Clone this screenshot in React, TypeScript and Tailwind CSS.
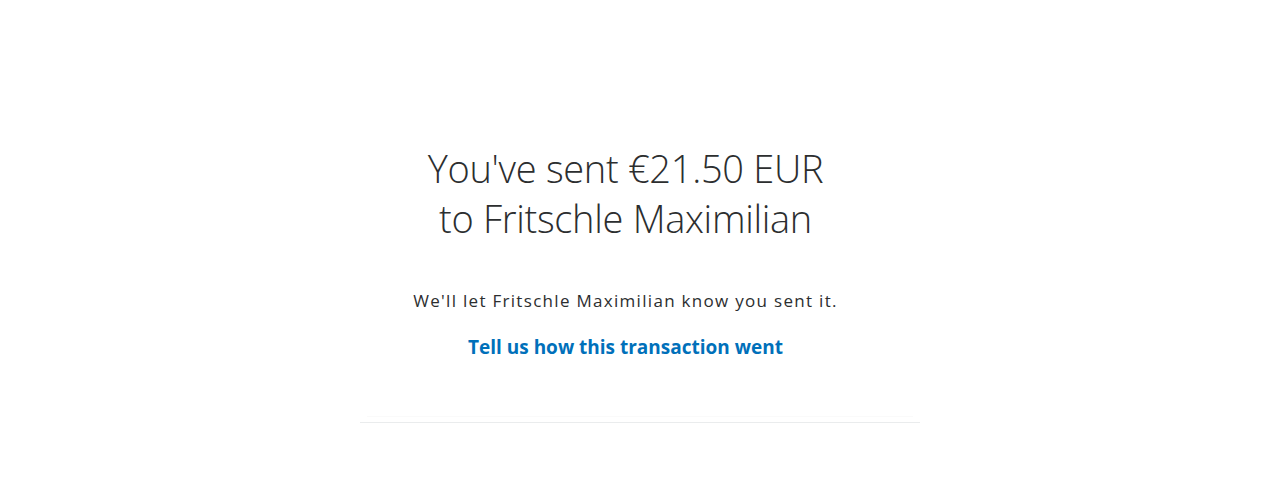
export default function App() {
  return (
    <div className="min-h-screen w-full bg-white font-['Open_Sans',sans-serif] text-[#2c2e2f]">
      <div className="mx-auto flex w-[560px] flex-col pt-[143px]">
        <div className="flex flex-col items-center pr-[29px]">
          <h1 className="text-center text-[38px] font-light leading-[50px] tracking-[-0.3px]">
            You've sent €21.50 EUR
            <br />
            to Fritschle Maximilian
          </h1>
          <p className="mt-[46px] text-[17px] leading-[24px] tracking-[1.3px]">
            We'll let Fritschle Maximilian know you sent it.
          </p>
          <a href="#" className="mt-[21px] text-[19px] font-bold leading-[26px] text-[#0070ba]">
            Tell us how this transaction went
          </a>
        </div>
        <div className="mx-[7px] mt-[56px] h-px bg-[#fafafa]" />
        <div className="mt-[5px] h-px w-full bg-[#eaeced]" />
      </div>
    </div>
  );
}
